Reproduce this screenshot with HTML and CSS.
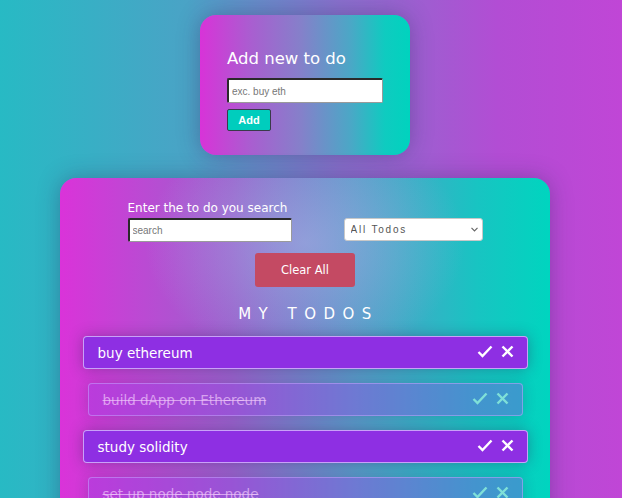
FILE: index.html
```html
<!DOCTYPE html>
<html>
<head>
<meta charset="utf-8">
<link rel="stylesheet" href="styles.css">
</head>
<body>
<div class="page">
  <form class="add-card">
    <h1 class="add-title">Add new to do</h1>
    <input class="add-input" type="text" placeholder="exc. buy eth">
    <button class="add-btn" type="button">Add</button>
  </form>

  <section class="list-card">
    <div class="search-row">
      <div class="search-group">
        <label class="search-label">Enter the to do you search</label>
        <input class="search-input" type="text" placeholder="search">
      </div>
      <div class="filter-wrap">
        <select class="filter">
          <option>All Todos</option>
        </select>
        <svg class="chev" width="7" height="5" viewBox="0 0 7 5"><polyline points="0.5,0.8 3.5,3.8 6.5,0.8"/></svg>
      </div>
    </div>
    <button class="clear-btn" type="button">Clear All</button>
    <h2 class="list-title">MY TODOS</h2>
    <ul class="todos">
      <li class="todo">
        <span class="todo-text">buy ethereum</span>
        <span class="actions">
          <svg class="ico" width="16" height="13" viewBox="0 0 16 13"><polyline points="1.5,7 5.5,11 14.5,1.5" /></svg>
          <svg class="ico" width="13" height="13" viewBox="0 0 13 13"><line x1="1.5" y1="1.5" x2="11.5" y2="11.5"/><line x1="11.5" y1="1.5" x2="1.5" y2="11.5"/></svg>
        </span>
      </li>
      <li class="todo done">
        <span class="todo-text">build dApp on Ethereum</span>
        <span class="actions">
          <svg class="ico" width="16" height="13" viewBox="0 0 16 13"><polyline points="1.5,7 5.5,11 14.5,1.5" /></svg>
          <svg class="ico" width="13" height="13" viewBox="0 0 13 13"><line x1="1.5" y1="1.5" x2="11.5" y2="11.5"/><line x1="11.5" y1="1.5" x2="1.5" y2="11.5"/></svg>
        </span>
      </li>
      <li class="todo">
        <span class="todo-text">study solidity</span>
        <span class="actions">
          <svg class="ico" width="16" height="13" viewBox="0 0 16 13"><polyline points="1.5,7 5.5,11 14.5,1.5" /></svg>
          <svg class="ico" width="13" height="13" viewBox="0 0 13 13"><line x1="1.5" y1="1.5" x2="11.5" y2="11.5"/><line x1="11.5" y1="1.5" x2="1.5" y2="11.5"/></svg>
        </span>
      </li>
      <li class="todo done">
        <span class="todo-text">set up node node node</span>
        <span class="actions">
          <svg class="ico" width="16" height="13" viewBox="0 0 16 13"><polyline points="1.5,7 5.5,11 14.5,1.5" /></svg>
          <svg class="ico" width="13" height="13" viewBox="0 0 13 13"><line x1="1.5" y1="1.5" x2="11.5" y2="11.5"/><line x1="11.5" y1="1.5" x2="1.5" y2="11.5"/></svg>
        </span>
      </li>
    </ul>
  </section>
</div>
</body>
</html>
```

FILE: styles.css
```css
html, body {
  margin: 0;
  padding: 0;
  height: 498px;
  overflow: hidden;
}
body {
  background: linear-gradient(90deg, #27bac4 0%, #4aa3c6 30%, #8a6fcd 55%, #b24dd4 80%, #c046d6 100%);
  font-family: "DejaVu Sans", "Open Sans", sans-serif;
  color: #fff;
}
.page {
  width: 610px;
  display: flex;
  flex-direction: column;
  align-items: center;
  padding-top: 15px;
}
.add-card {
  width: 210px;
  height: 140px;
  box-sizing: border-box;
  padding: 33px 27px 0;
  border-radius: 16px;
  background: linear-gradient(90deg, #d833d8 0%, #a85fd0 25%, #8580ca 48%, #4aa8c6 72%, #0fcbc0 88%, #00d3be 100%);
  box-shadow: 0 0 22px rgba(40, 40, 90, 0.35);
  display: flex;
  flex-direction: column;
  align-items: flex-start;
}
.add-title {
  margin: 0;
  font-size: 16.5px;
  font-weight: normal;
  line-height: 22px;
}
.add-input {
  margin-top: 8px;
  width: 156px;
  height: 25px;
  box-sizing: border-box;
  border: 1px solid #9a9a9a;
  border-top: 2px solid #2a2a2a;
  border-left: 2px solid #2a2a2a;
  border-radius: 2px;
  padding: 0 3px;
  font-family: "Liberation Sans", Arial, sans-serif;
  font-size: 10px;
  background: #fff;
}
.add-input::placeholder, .search-input::placeholder { color: #777; }
.add-btn {
  margin-top: 6px;
  width: 44px;
  height: 22px;
  padding: 0;
  background: #00cdbd;
  color: #fff;
  border: 1px solid #3a3a4a;
  border-radius: 2px;
  font-family: "Liberation Sans", Arial, sans-serif;
  font-weight: bold;
  font-size: 11px;
}
.list-card {
  margin-top: 23px;
  width: 490px;
  height: 360px;
  box-sizing: border-box;
  padding: 22px 22px 0;
  border-radius: 16px;
  background:
    radial-gradient(ellipse 160px 120px at 50% 18%, rgba(170, 180, 230, 0.55), rgba(170, 180, 230, 0) 100%),
    linear-gradient(90deg, #da33d9 0%, #9a62cd 35%, #5a9ac9 60%, #18c4c2 85%, #00d5bf 100%);
  box-shadow: 0 0 22px rgba(40, 40, 90, 0.35);
  display: flex;
  flex-direction: column;
  align-items: center;
}
.search-row {
  display: flex;
  align-items: flex-end;
  gap: 52px;
}
.search-group {
  display: flex;
  flex-direction: column;
}
.search-label {
  font-size: 12px;
  line-height: 16px;
}
.search-input {
  margin-top: 2px;
  width: 164px;
  height: 24px;
  box-sizing: border-box;
  border: 1px solid #9a9a9a;
  border-top: 2px solid #2a2a2a;
  border-left: 2px solid #2a2a2a;
  border-radius: 2px;
  padding: 0 3px;
  font-family: "Liberation Sans", Arial, sans-serif;
  font-size: 10px;
  background: #fff;
}
.filter-wrap {
  position: relative;
  margin-bottom: 1px;
}
.filter {
  display: block;
  width: 139px;
  height: 23px;
  box-sizing: border-box;
  border: 1px solid #c8c8c8;
  border-radius: 3px;
  background: #fff;
  color: #555;
  font-family: "Liberation Sans", Arial, sans-serif;
  font-size: 10px;
  letter-spacing: 1.8px;
  padding: 0 6px;
  appearance: none;
  -webkit-appearance: none;
}
.chev {
  position: absolute;
  right: 5px;
  top: 9px;
  fill: none;
  stroke: #666;
  stroke-width: 1.2;
  pointer-events: none;
}
.clear-btn {
  margin-top: 11px;
  width: 100px;
  height: 34px;
  border: none;
  border-radius: 3px;
  background: #c44a63;
  color: #fff;
  font-family: "DejaVu Sans", sans-serif;
  font-size: 11.5px;
}
.list-title {
  margin: 17px 0 0;
  font-size: 15px;
  font-weight: normal;
  line-height: 20px;
  letter-spacing: 7.5px;
  padding-left: 7px;
}
.todos {
  list-style: none;
  margin: 12px 0 0;
  padding: 0;
  width: 445px;
  display: flex;
  flex-direction: column;
  gap: 14px;
}
.todo {
  height: 33px;
  box-sizing: border-box;
  padding: 0 13px 0 14px;
  display: flex;
  align-items: center;
  justify-content: space-between;
  background: #8e2fe3;
  border: 1px solid rgba(220, 200, 255, 0.75);
  border-radius: 4px;
  box-shadow: 0 0 14px rgba(40, 30, 80, 0.35);
}
.todo-text {
  font-size: 13.5px;
}
.actions {
  display: flex;
  align-items: center;
  gap: 8px;
  padding-bottom: 2px;
}
.ico {
  fill: none;
  stroke: #fff;
  stroke-width: 2.4;
}
.todo.done {
  margin: 0 5px;
  background: rgba(150, 60, 230, 0.35);
  border-color: rgba(200, 170, 255, 0.5);
  box-shadow: 0 0 14px rgba(40, 30, 80, 0.2);
}
.todo.done .todo-text {
  color: rgba(240, 200, 250, 0.7);
  text-decoration: line-through;
}
.todo.done .ico {
  stroke: #7fe0d8;
}
```
